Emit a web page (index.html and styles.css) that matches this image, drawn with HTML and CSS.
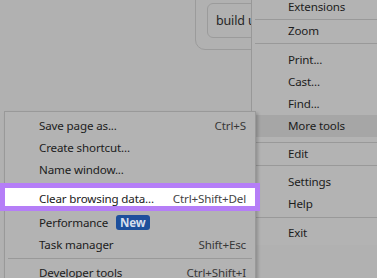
FILE: index.html
```html
<!DOCTYPE html>
<html lang="en">
<head>
    <meta charset="UTF-8">
    <meta name="viewport" content="width=device-width, initial-scale=1.0">
    <title>More tools</title>
    <link rel="stylesheet" href="styles.css">
</head>
<body>
    <div class="page">
        <div class="card">
            <div class="prompt">build u</div>
        </div>
    </div>

    <div class="menu main-menu">
        <div class="item first">Extensions</div>
        <div class="sep tight"></div>
        <div class="item zoom">Zoom</div>
        <div class="sep tight"></div>
        <div class="group top5">
            <div class="item">Print...</div>
            <div class="item">Cast...</div>
            <div class="item">Find...</div>
            <div class="item active">More tools</div>
        </div>
        <div class="sep gap5"></div>
        <div class="item short">Edit</div>
        <div class="sep tight"></div>
        <div class="group top5">
            <div class="item">Settings</div>
            <div class="item">Help</div>
        </div>
        <div class="sep gap2"></div>
        <div class="group top4">
            <div class="item">Exit</div>
        </div>
    </div>

    <div class="menu sub-menu">
        <div class="item"><span>Save page as...</span><span class="key">Ctrl+S</span></div>
        <div class="item"><span>Create shortcut...</span></div>
        <div class="item"><span>Name window...</span></div>
        <div class="sep"></div>
        <div class="item spot"><span>Clear browsing data...</span><span class="key">Ctrl+Shift+Del</span></div>
        <div class="item"><span>Performance <span class="badge">New</span></span></div>
        <div class="item"><span>Task manager</span><span class="key">Shift+Esc</span></div>
        <div class="sep"></div>
        <div class="item"><span>Developer tools</span><span class="key">Ctrl+Shift+I</span></div>
    </div>
</body>
</html>
```

FILE: styles.css
```css
body {
    margin: 0;
    width: 377px;
    height: 278px;
    overflow: hidden;
    position: relative;
    background: #b1b1b1;
    font-family: "Noto Sans", "Open Sans", sans-serif;
    font-size: 11.6px;
    letter-spacing: -0.15px;
    color: #1c1c1c;
}
.page {
    padding-left: 195px;
}
.card {
    margin-top: -30px;
    height: 80px;
    border: 1px solid #9b9b9b;
    border-radius: 10px;
    padding: 32px 0 0 11px;
    box-sizing: border-box;
}
.prompt {
    height: 35px;
    border: 1px solid #9b9b9b;
    border-radius: 6px;
    box-sizing: border-box;
    padding-left: 8px;
    line-height: 33px;
    font-size: 12.5px;
    color: #262626;
}
.menu {
    position: absolute;
    background: #b3b3b3;
}
.main-menu {
    left: 251px;
    right: 0;
    top: -4px;
    height: 249px;
    border-left: 1px solid #989898;
}
.main-menu .item {
    height: 22px;
    line-height: 22px;
    padding-left: 36px;
}
.main-menu .item.short {
    height: 21px;
    line-height: 21px;
}
.main-menu .item.active {
    background: #a6a6a6;
}
.main-menu .sep {
    height: 1px;
    margin-left: 3px;
    background: #999;
}
.main-menu .sep.tight {
    margin-top: 1px;
}
.main-menu .sep.gap5 {
    margin-top: 5px;
}
.main-menu .sep.gap2 {
    margin-top: 2px;
}
.group.top5 {
    padding-top: 5px;
}
.group.top4 {
    padding-top: 4px;
}
.sub-menu {
    left: 4px;
    top: 111px;
    width: 250px;
    padding-top: 2px;
    border: 1px solid #999;
    box-shadow: 2px 2px 3px rgba(0, 0, 0, 0.2);
}
.sub-menu .item {
    height: 22px;
    display: flex;
    align-items: center;
    justify-content: space-between;
    padding: 0 9px 0 34px;
}
.sub-menu .key {
    color: #383838;
}
.sub-menu .sep {
    height: 1px;
    margin: 3px 3px 2px;
    background: #999;
}
.sub-menu .item.spot {
    position: relative;
    height: 16px;
    margin: 4px 0 5px;
    padding-top: 2px;
    background: #fff;
    outline: 5px solid #b57ef7;
    color: #202020;
}
.sub-menu .item.spot .key {
    color: #444;
}
.badge {
    display: inline-block;
    margin-left: 5px;
    padding: 0 4px;
    height: 15px;
    line-height: 15px;
    border-radius: 3px;
    background: #1d4f9c;
    color: #d6deed;
    font-weight: bold;
}
```
